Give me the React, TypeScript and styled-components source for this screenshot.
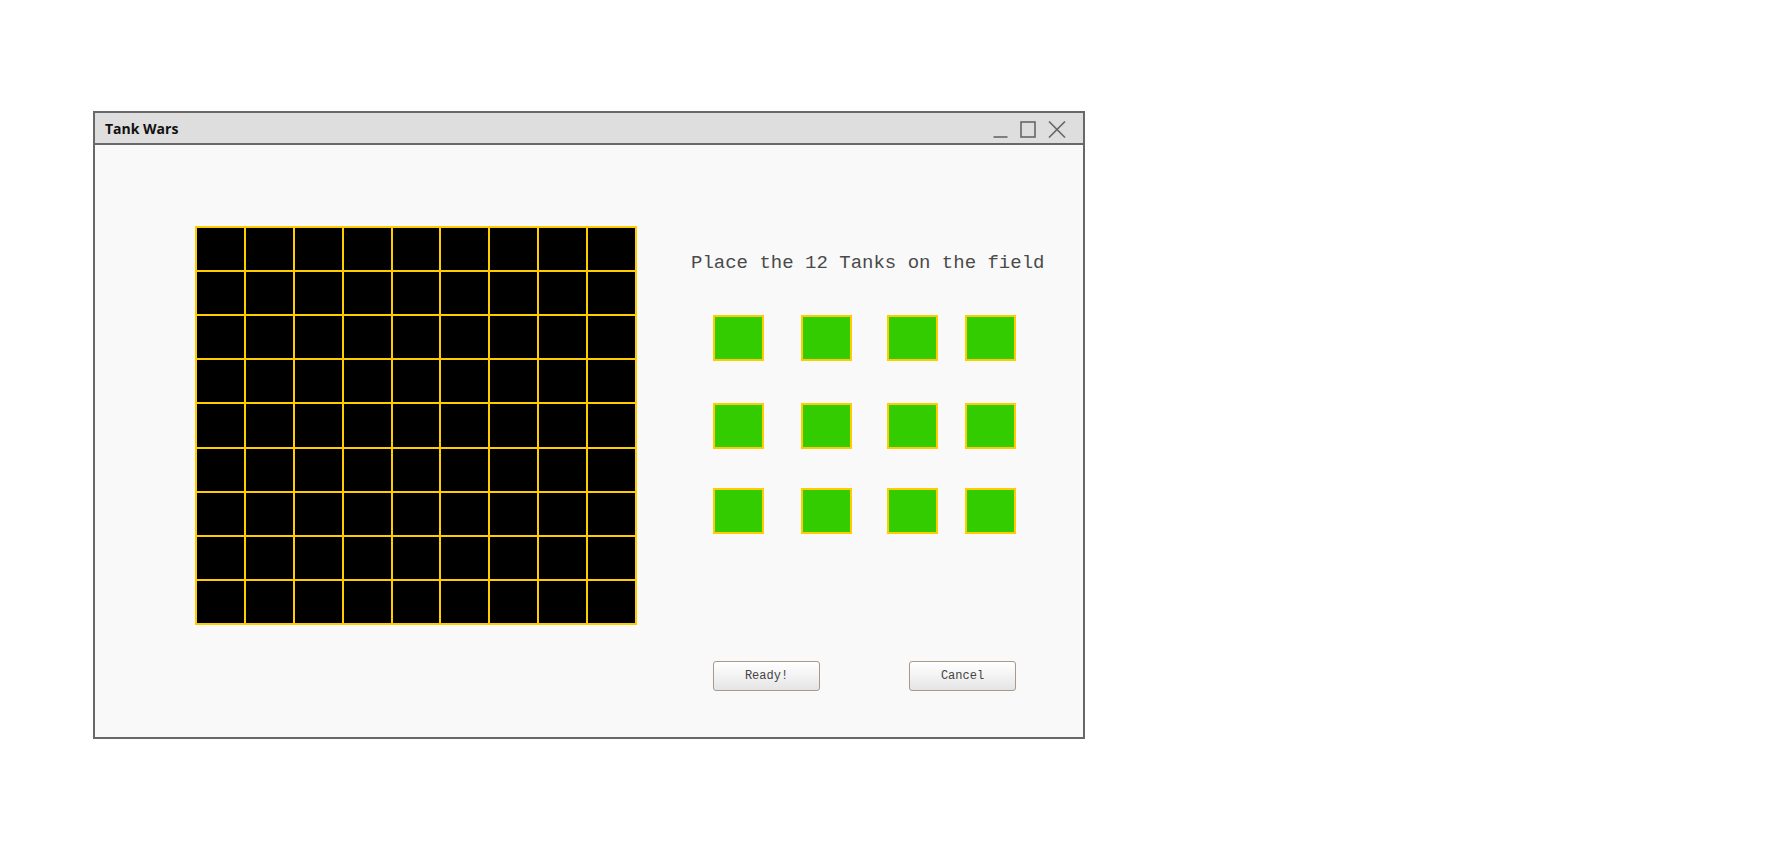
import React from "react";
import styled, { createGlobalStyle } from "styled-components";

const GlobalStyle = createGlobalStyle`
    html, body {
        margin: 0;
        padding: 0;
        background: #ffffff;
    }
`;

const Page = styled.div`
    padding: 111px 0 0 93px;
    min-height: 857px;
    box-sizing: border-box;
`;

const Window = styled.div`
    width: 992px;
    height: 628px;
    box-sizing: border-box;
    border: 2px solid #686868;
    background: #f9f9f9;
    display: flex;
    flex-direction: column;
`;

const TitleBar = styled.div`
    height: 32px;
    box-sizing: border-box;
    background: #dedede;
    border-bottom: 2px solid #686868;
    display: flex;
    align-items: center;
    justify-content: space-between;
    padding: 0 17px 0 10px;
`;

const Title = styled.span`
    font-family: "Open Sans", "Noto Sans", sans-serif;
    font-weight: 700;
    font-size: 14px;
    color: #111;
`;

const Controls = styled.div`
    display: flex;
    align-items: center;
    gap: 12px;
    padding-top: 2px;
`;

const Body = styled.div`
    flex: 1;
    display: flex;
    padding: 81px 0 0 100px;
    gap: 54px;
`;

const Field = styled.div`
    width: 442px;
    height: 399px;
    box-sizing: border-box;
    background: #ffcc00;
    padding: 2px;
    display: grid;
    grid-template-columns: repeat(9, 1fr);
    grid-template-rows: repeat(9, 1fr);
    gap: 2px;
`;

const Cell = styled.div`
    background: #000;
`;

const Side = styled.div`
    display: flex;
    flex-direction: column;
`;

const Prompt = styled.div`
    font-family: "Liberation Mono", "Courier New", monospace;
    font-size: 19px;
    line-height: 22px;
    color: #4a4a4a;
    margin-top: 26px;
`;

const Tanks = styled.div`
    margin: 41px 0 0 22px;
    display: grid;
    grid-template-columns: 88px 86px 78px 51px;
    grid-template-rows: 88px 85px 46px;
`;

const Tank = styled.div`
    width: 51px;
    height: 46px;
    box-sizing: border-box;
    background: #33cc00;
    border: 2px solid #ffcc00;
`;

const Buttons = styled.div`
    margin: 127px 0 0 22px;
    display: flex;
    gap: 89px;
`;

const Button = styled.button`
    width: 107px;
    height: 30px;
    box-sizing: border-box;
    border: 1px solid #a8998a;
    border-radius: 3px;
    background: linear-gradient(#ffffff, #f4f4f4 45%, #e4e4e4);
    font-family: "Liberation Mono", "Courier New", monospace;
    font-size: 12px;
    color: #444;
    padding: 0;
    cursor: pointer;
`;

const Icon = styled.svg`
    display: block;
    stroke: #666;
    fill: none;
    stroke-width: 1.6;
`;

const App: React.FC = () => {
    const cells = Array.from({ length: 81 });
    const tanks = Array.from({ length: 12 });

    return (
        <>
            <GlobalStyle />
            <Page>
                <Window>
                    <TitleBar>
                        <Title>Tank Wars</Title>
                        <Controls>
                            <Icon width="15" height="17" viewBox="0 0 15 17">
                                <line x1="0.5" y1="16" x2="14.5" y2="16" />
                            </Icon>
                            <Icon width="16" height="17" viewBox="0 0 16 17">
                                <rect x="1" y="1" width="14" height="15" />
                            </Icon>
                            <Icon width="18" height="17" viewBox="0 0 18 17">
                                <line x1="1" y1="0.5" x2="17" y2="16.5" />
                                <line x1="17" y1="0.5" x2="1" y2="16.5" />
                            </Icon>
                        </Controls>
                    </TitleBar>
                    <Body>
                        <Field>
                            {cells.map((_, i) => (
                                <Cell key={i} />
                            ))}
                        </Field>
                        <Side>
                            <Prompt>Place the 12 Tanks on the field</Prompt>
                            <Tanks>
                                {tanks.map((_, i) => (
                                    <Tank key={i} />
                                ))}
                            </Tanks>
                            <Buttons>
                                <Button>Ready!</Button>
                                <Button>Cancel</Button>
                            </Buttons>
                        </Side>
                    </Body>
                </Window>
            </Page>
        </>
    );
};

export default App;
